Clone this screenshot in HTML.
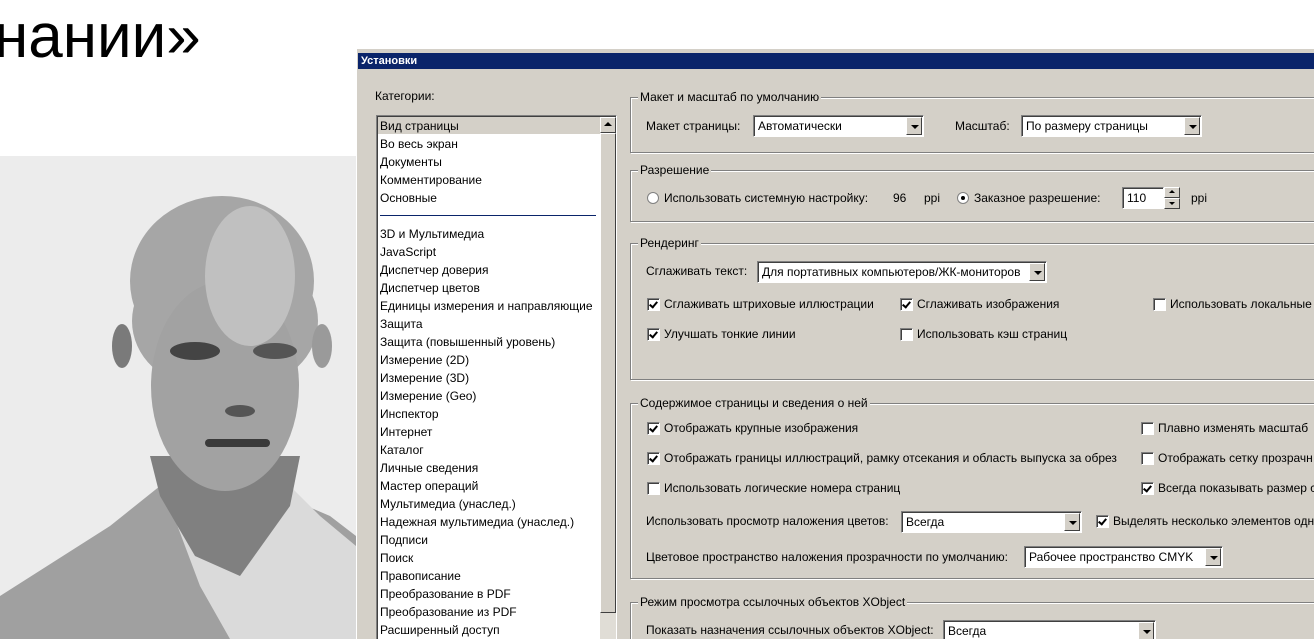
<!DOCTYPE html>
<html style="overflow:hidden;width:1314px;height:639px"><head><meta charset="utf-8"><style>
*{margin:0;padding:0;box-sizing:border-box}
body{width:1314px;height:639px;overflow:hidden;background:#fff;position:relative;font-family:"Liberation Sans","DejaVu Sans",sans-serif}
.a{position:absolute;white-space:nowrap}
.t{position:absolute;white-space:nowrap;font-size:12px;color:#000;line-height:14px}
.g{position:absolute;border:1px solid #808080;box-shadow:inset 1px 1px 0 #fff,1px 1px 0 #fff}
.lg{position:absolute;background:#d4d0c8;padding:0 2px;font-size:12px;line-height:14px;white-space:nowrap}
.cb{position:absolute;width:13px;height:13px;background:#fff;border:1px solid #808080;border-right-color:#fff;border-bottom-color:#fff;box-shadow:inset 1px 1px 0 #404040}
.cb.k::after{content:"";position:absolute;left:3px;top:1px;width:3px;height:6px;border:solid #000;border-width:0 2px 2px 0;transform:rotate(40deg)}
.rd{position:absolute;width:12px;height:12px;border-radius:50%;background:#fff;border:1px solid #808080}
.rd.k::after{content:"";position:absolute;left:3px;top:3px;width:4px;height:4px;border-radius:50%;background:#000}
.cm{position:absolute;background:#fff;border:1px solid #808080;border-right-color:#fff;border-bottom-color:#fff;box-shadow:inset 1px 1px 0 #404040;font-size:12px;line-height:20px;padding-left:4px;white-space:nowrap;overflow:hidden}
.cm .b{position:absolute;right:1px;top:1px;bottom:1px;width:16px;background:#d4d0c8;border:1px solid #fff;border-right-color:#404040;border-bottom-color:#404040}
.cm .b::after{content:"";position:absolute;left:4px;top:7px;border:4px solid transparent;border-top:4px solid #000;border-bottom:0}
</style></head><body>
<div class="a" style="left:-6px;top:2px;font-size:62px;line-height:70px;color:#000">нании»</div>

<svg class="a" style="left:0;top:156px" width="356" height="483" viewBox="0 0 356 483">
<rect width="356" height="483" fill="#ececec"/>
<path d="M0 440 L110 370 L160 330 L260 330 L330 360 L356 380 L356 483 L0 483Z" fill="#a0a0a0"/>
<path d="M170 350 L200 430 L230 483 L356 483 L356 390 L320 360 L290 330Z" fill="#dadada"/>
<path d="M150 300 L160 340 L195 400 L240 420 L290 350 L300 300Z" fill="#808080"/>
<ellipse cx="222" cy="125" rx="92" ry="85" fill="#a6a6a6"/>
<rect x="132" y="100" width="186" height="130" rx="70" fill="#a6a6a6"/>
<ellipse cx="225" cy="230" rx="74" ry="105" fill="#a2a2a2"/>
<ellipse cx="250" cy="120" rx="45" ry="70" fill="#c0c0c0"/>
<ellipse cx="122" cy="190" rx="10" ry="22" fill="#7a7a7a"/>
<ellipse cx="322" cy="190" rx="10" ry="22" fill="#9a9a9a"/>
<ellipse cx="195" cy="195" rx="25" ry="9" fill="#444"/>
<ellipse cx="275" cy="195" rx="22" ry="8" fill="#555"/>
<ellipse cx="240" cy="255" rx="15" ry="6" fill="#555"/>
<rect x="205" y="283" width="65" height="8" rx="4" fill="#3a3a3a"/>
</svg>

<div class="a" style="left:356px;top:48px;width:960px;height:600px;background:#d4d0c8;border-left:1px solid #fff;border-top:1px solid #fff"></div>
<div class="a" style="left:358px;top:53px;width:960px;height:16px;background:#0a246a"></div>
<div class="a" style="left:361px;top:54px;font-size:11px;line-height:14px;font-weight:bold;color:#fff">Установки</div>

<div class="t" style="left:375px;top:89px">Категории:</div>
<div class="a" style="left:376px;top:115px;width:241px;height:540px;background:#fff;border:1px solid #808080;border-right-color:#fff;box-shadow:inset 1px 1px 0 #404040"></div>
<div class="a" style="left:378px;top:117px;width:222px;height:17px;background:#d4d0c8"></div>
<div class="a" style="left:600px;top:117px;width:16px;height:530px;background:#e0ddd6"></div>
<div class="a" style="left:600px;top:117px;width:16px;height:16px;background:#d4d0c8;border:1px solid #fff;border-right-color:#404040;border-bottom-color:#404040"></div>
<div class="a" style="left:604px;top:122px;border:4px solid transparent;border-bottom:4px solid #000;border-top:0"></div>
<div class="a" style="left:600px;top:133px;width:16px;height:480px;background:#d4d0c8;border:1px solid #fff;border-right-color:#404040;border-bottom-color:#404040"></div>
<div class="a" style="left:380px;top:215px;width:216px;height:1px;background:#0a246a"></div>
<div class="t" style="left:380px;top:117px;line-height:18px">Вид страницы<br>Во весь экран<br>Документы<br>Комментирование<br>Основные</div>
<div class="t" style="left:380px;top:225px;line-height:18px">3D и Мультимедиа<br>JavaScript<br>Диспетчер доверия<br>Диспетчер цветов<br>Единицы измерения и направляющие<br>Защита<br>Защита (повышенный уровень)<br>Измерение (2D)<br>Измерение (3D)<br>Измерение (Geo)<br>Инспектор<br>Интернет<br>Каталог<br>Личные сведения<br>Мастер операций<br>Мультимедиа (унаслед.)<br>Надежная мультимедиа (унаслед.)<br>Подписи<br>Поиск<br>Правописание<br>Преобразование в PDF<br>Преобразование из PDF<br>Расширенный доступ</div>

<div class="g" style="left:630px;top:97px;width:720px;height:56px"></div>
<div class="lg" style="left:638px;top:90px">Макет и масштаб по умолчанию</div>
<div class="t" style="left:646px;top:119px">Макет страницы:</div>
<div class="cm" style="left:753px;top:115px;width:171px;height:22px">Автоматически<div class="b"></div></div>
<div class="t" style="left:955px;top:119px">Масштаб:</div>
<div class="cm" style="left:1021px;top:115px;width:181px;height:22px">По размеру страницы<div class="b"></div></div>

<div class="g" style="left:630px;top:170px;width:720px;height:52px"></div>
<div class="lg" style="left:638px;top:163px">Разрешение</div>
<div class="rd" style="left:647px;top:192px"></div>
<div class="t" style="left:664px;top:191px">Использовать системную настройку:</div>
<div class="t" style="left:893px;top:191px">96</div>
<div class="t" style="left:924px;top:191px">ppi</div>
<div class="rd k" style="left:957px;top:192px"></div>
<div class="t" style="left:974px;top:191px">Заказное разрешение:</div>
<div class="cm" style="left:1122px;top:187px;width:42px;height:22px">110</div>
<div class="a" style="left:1164px;top:187px;width:16px;height:11px;background:#d4d0c8;border:1px solid #fff;border-right-color:#404040;border-bottom-color:#404040"></div>
<div class="a" style="left:1164px;top:198px;width:16px;height:11px;background:#d4d0c8;border:1px solid #fff;border-right-color:#404040;border-bottom-color:#404040"></div>
<div class="a" style="left:1169px;top:190px;border:3px solid transparent;border-bottom:3px solid #000;border-top:0"></div>
<div class="a" style="left:1169px;top:202px;border:3px solid transparent;border-top:3px solid #000;border-bottom:0"></div>
<div class="t" style="left:1191px;top:191px">ppi</div>

<div class="g" style="left:630px;top:243px;width:720px;height:137px"></div>
<div class="lg" style="left:638px;top:236px">Рендеринг</div>
<div class="t" style="left:646px;top:264px">Сглаживать текст:</div>
<div class="cm" style="left:757px;top:261px;width:290px;height:22px">Для портативных компьютеров/ЖК-мониторов<div class="b"></div></div>
<div class="cb k" style="left:647px;top:298px"></div><div class="t" style="left:664px;top:297px">Сглаживать штриховые иллюстрации</div>
<div class="cb k" style="left:900px;top:298px"></div><div class="t" style="left:917px;top:297px">Сглаживать изображения</div>
<div class="cb" style="left:1153px;top:298px"></div><div class="t" style="left:1170px;top:297px">Использовать локальные</div>
<div class="cb k" style="left:647px;top:328px"></div><div class="t" style="left:664px;top:327px">Улучшать тонкие линии</div>
<div class="cb" style="left:900px;top:328px"></div><div class="t" style="left:917px;top:327px">Использовать кэш страниц</div>

<div class="g" style="left:630px;top:403px;width:720px;height:176px"></div>
<div class="lg" style="left:638px;top:396px">Содержимое страницы и сведения о ней</div>
<div class="cb k" style="left:647px;top:422px"></div><div class="t" style="left:664px;top:421px">Отображать крупные изображения</div>
<div class="cb" style="left:1141px;top:422px"></div><div class="t" style="left:1158px;top:421px">Плавно изменять масштаб</div>
<div class="cb k" style="left:647px;top:452px"></div><div class="t" style="left:664px;top:451px">Отображать границы иллюстраций, рамку отсекания и область выпуска за обрез</div>
<div class="cb" style="left:1141px;top:452px"></div><div class="t" style="left:1158px;top:451px">Отображать сетку прозрачн</div>
<div class="cb" style="left:647px;top:482px"></div><div class="t" style="left:664px;top:481px">Использовать логические номера страниц</div>
<div class="cb k" style="left:1141px;top:482px"></div><div class="t" style="left:1158px;top:481px">Всегда показывать размер ст</div>
<div class="t" style="left:646px;top:514px">Использовать просмотр наложения цветов:</div>
<div class="cm" style="left:901px;top:511px;width:181px;height:22px">Всегда<div class="b"></div></div>
<div class="cb k" style="left:1096px;top:515px"></div><div class="t" style="left:1113px;top:514px">Выделять несколько элементов одно</div>
<div class="t" style="left:646px;top:550px">Цветовое пространство наложения прозрачности по умолчанию:</div>
<div class="cm" style="left:1024px;top:546px;width:199px;height:22px">Рабочее пространство CMYK<div class="b"></div></div>

<div class="g" style="left:630px;top:602px;width:720px;height:60px"></div>
<div class="lg" style="left:638px;top:595px">Режим просмотра ссылочных объектов XObject</div>
<div class="t" style="left:646px;top:623px">Показать назначения ссылочных объектов XObject:</div>
<div class="cm" style="left:943px;top:620px;width:213px;height:22px">Всегда<div class="b"></div></div>
</body></html>
